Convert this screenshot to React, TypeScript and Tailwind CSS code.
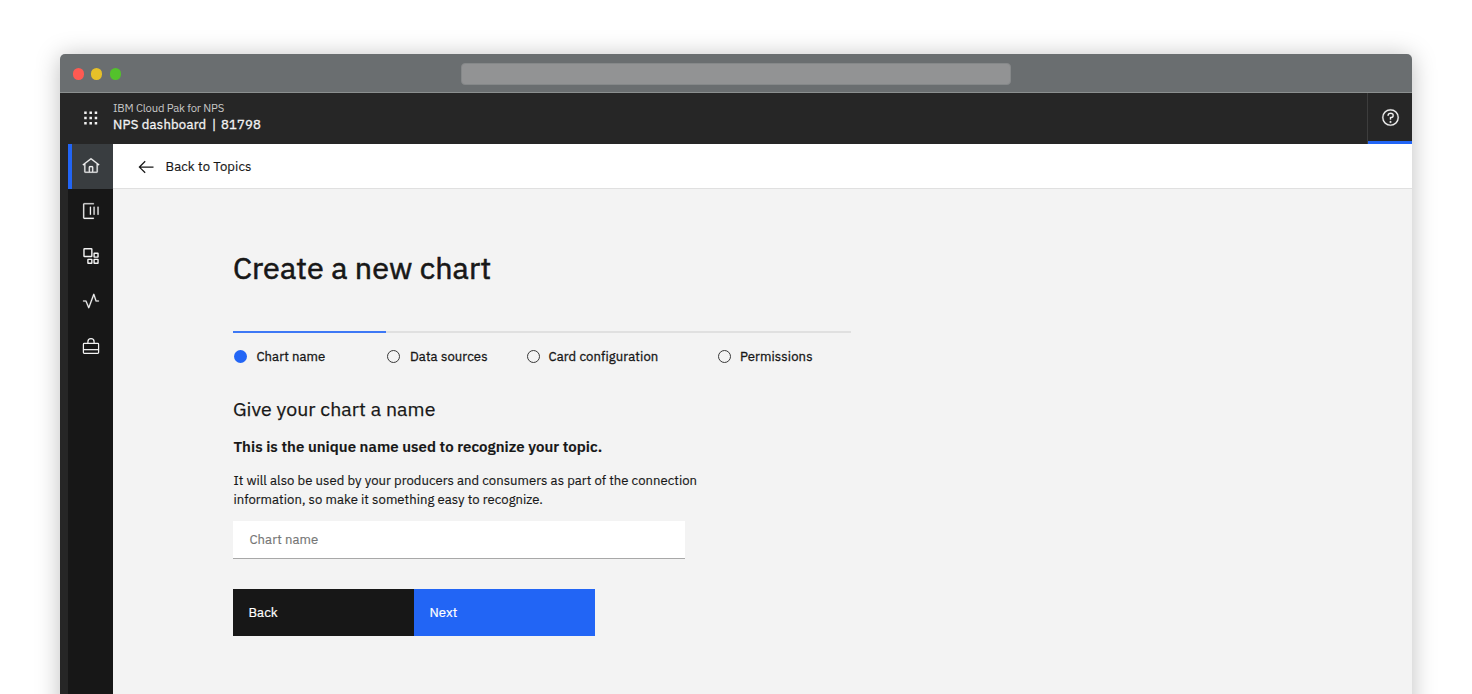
import type { ReactNode } from "react";

function Icon({ size = 18, stroke = "0.4", children }: { size?: number; stroke?: string; children: ReactNode }) {
  return (
    <svg
      width={size}
      height={size}
      viewBox="0 0 32 32"
      fill="currentColor"
      stroke="currentColor"
      strokeWidth={stroke}
      className="shrink-0"
    >
      {children}
    </svg>
  );
}

const SwitcherIcon = () => (
  <svg width="14" height="14" viewBox="0 0 14 14" fill="currentColor">
    {[0.5, 5.75, 11].map((y) => [0.2, 5.45, 10.7].map((x) => <rect key={`${x}-${y}`} x={x} y={y} width="2.5" height="2.5" />))}
  </svg>
);

const HomeIcon = () => (
  <Icon>
    <path d="M16.6123,2.2138a1.01,1.01,0,0,0-1.2427,0L1,13.4194l1.2427,1.5717L4,13.621V26a2.0041,2.0041,0,0,0,2,2H26a2.0037,2.0037,0,0,0,2-2V13.63L29.7573,15,31,13.4282ZM18,26H14V18h4Zm2,0V18a2.0023,2.0023,0,0,0-2-2H14a2.002,2.002,0,0,0-2,2v8H6V12.0615l10-7.79,10,7.8005V26Z" />
  </Icon>
);

const TopicsIcon = () => (
  <Icon>
    <path d="M21 2H4a2 2 0 0 0-2 2v24a2 2 0 0 0 2 2H21v-2H4V4H21zM14 8.500h2v14h-2zM20.500 8.500h2v14h-2zM27.500 8.500h2v14h-2z" />
  </Icon>
);

const BlocksIcon = () => (
  <Icon>
    <g fill="none" strokeWidth="2.5">
      <rect x="3.5" y="3" width="14" height="14" rx="1" />
      <rect x="21.500" y="11" width="7" height="7" rx="0.5" />
      <rect x="21.500" y="22" width="7" height="7" rx="0.5" />
      <rect x="10.500" y="22" width="7" height="7" rx="0.5" />
    </g>
  </Icon>
);

const ActivityIcon = () => (
  <Icon>
    <path d="M12,29a1,1,0,0,1-.92-.62L6.33,17H2V15H7a1,1,0,0,1,.92.62L12,25.28,20.06,3.65A1,1,0,0,1,21,3a1,1,0,0,1,.93.68L25.72,15H30v2H25a1,1,0,0,1-.95-.68L21,7,12.94,28.35A1,1,0,0,1,12,29Z" />
  </Icon>
);

const ToolboxIcon = () => (
  <Icon>
    <g fill="none" strokeWidth="2.2">
      <path d="M10.500 11.500V8.500a5.500 5.500 0 0 1 11 0V11.500" />
      <rect x="2.500" y="11.500" width="27" height="17.500" rx="1.500" />
      <path d="M2.500 22.500h27" />
    </g>
  </Icon>
);

const HelpIcon = () => (
  <Icon size={19}>
    <path d="M16,2A14,14,0,1,0,30,16,14,14,0,0,0,16,2Zm0,26A12,12,0,1,1,28,16,12,12,0,0,1,16,28Z" />
    <circle cx="16" cy="23.5" r="1.5" />
    <path d="M17,8H15.5A4.49,4.49,0,0,0,11,12.49V13h2v-.5A2.5,2.5,0,0,1,15.5,10H17a2.5,2.5,0,0,1,0,5H15v4.5h2V17a4.5,4.5,0,0,0,0-9Z" />
  </Icon>
);

const NAV = [
  { name: "topics", icon: <TopicsIcon /> },
  { name: "blocks", icon: <BlocksIcon /> },
  { name: "activity", icon: <ActivityIcon /> },
  { name: "toolbox", icon: <ToolboxIcon /> },
];

const STEPS = [
  { label: "Chart name", width: "w-[152.5px]", gap: "ml-[9px]", spacing: "tracking-[0.08px]", active: true },
  { label: "Data sources", width: "w-[140px]", gap: "ml-[10px]", spacing: "tracking-[0.11px]", active: false },
  { label: "Card configuration", width: "w-[191px]", gap: "ml-[8.5px]", spacing: "tracking-[0.11px]", active: false },
  { label: "Permissions", width: "w-[134px]", gap: "ml-[9px]", spacing: "tracking-[0.12px]", active: false },
];

export default function App() {
  return (
    <div className="h-[694px] overflow-hidden bg-white px-[60px] pt-[54px] font-['IBM_Plex_Sans',Roboto,sans-serif] text-[13.1px] text-[#171717]">
      <div className="flex h-[700px] flex-col overflow-hidden rounded-t-[5px] bg-[#f3f3f3] shadow-[0_2px_24px_rgba(0,0,0,0.26)]">
        <div className="flex h-[39px] shrink-0 items-center border-b border-[#8b8f8f] bg-[#6a6e70]">
          <div className="flex w-[401px] items-center gap-[7.4px] pt-[2px] pl-[12.5px]">
            <span className="size-[11.3px] rounded-full bg-[#ff5a52]" />
            <span className="size-[11.3px] rounded-full bg-[#e6c029]" />
            <span className="size-[11.3px] rounded-full bg-[#53c22b]" />
          </div>
          <div className="mt-[2px] h-[22px] w-[550px] rounded-[4px] border border-[#858889] bg-[#929394]" />
        </div>

        <header className="flex h-[51px] shrink-0 bg-[#262626] text-[#f3f3f3]">
          <div className="flex w-[53px] items-center pb-[2px] pl-[23.500px]">
            <SwitcherIcon />
          </div>
          <div className="flex flex-1 flex-col pt-[8px]">
            <span className="text-[11.25px] leading-[14px] tracking-[-0.18px] text-[#c6c6c6]">IBM Cloud Pak for NPS</span>
            <span className="mt-[1px] flex leading-[18px] [-webkit-text-stroke:0.3px]">
              <span className="w-[99px] tracking-[0.22px]">NPS dashboard</span>
              <span className="w-[9px]">|</span>
              <span className="tracking-[0.12px]">81798</span>
            </span>
          </div>
          <div className="flex w-[45px] items-center justify-center border-l border-[#3d3d3d] pb-[2px] shadow-[inset_0_-3px_0_#2265f5]">
            <HelpIcon />
          </div>
        </header>

        <div className="flex min-h-0 flex-1">
          <nav className="w-[53px] shrink-0 border-l-[8px] border-[#262626] bg-[#171717] text-[#f3f3f3]">
            <div className="flex h-[45px] items-center justify-center border-l-4 border-[#2265f5] bg-[#393d40] pr-[4px] pb-[1px]">
              <HomeIcon />
            </div>
            {NAV.map((item) => (
              <div key={item.name} className="flex h-[45px] items-center justify-center pb-[1px]">
                {item.icon}
              </div>
            ))}
          </nav>

          <main className="flex-1">
            <div className="flex h-[45px] items-center border-b border-[#e0e0e0] bg-white pl-[22.500px] pt-[1px]">
              <Icon size={20} stroke="0">
                <path d="M14 26 15.41 24.59 7.83 17 28 17 28 15 7.83 15 15.41 7.41 14 6 4 16 14 26z" />
              </Icon>
              <span className="ml-[10px] tracking-[0.08px] [-webkit-text-stroke:0.15px]">Back to Topics</span>
            </div>

            <div className="pl-[120.4px]">
              <h1 className="mt-[59px] -ml-[0.5px] text-[30.5px] leading-[40px] tracking-[0.1px] [-webkit-text-stroke:0.6px]">
                Create a new chart
              </h1>

              <div className="mt-[43px] flex h-[2px] w-[618px] bg-[#e0e0e0]">
                <div className="w-[153px] bg-[#3d78f5]" />
              </div>
              <div className="mt-[14px] flex h-[20px] w-[618px] items-center [-webkit-text-stroke:0.3px]">
                {STEPS.map((s) => (
                  <div key={s.label} className={"flex items-center pl-[1px] " + s.width}>
                    <span
                      className={
                        "mb-[1px] size-[13px] shrink-0 rounded-full " +
                        (s.active ? "bg-[#2265f5]" : "border border-[#393939]")
                      }
                    />
                    <span className={"whitespace-nowrap " + s.gap + " " + s.spacing}>{s.label}</span>
                  </div>
                ))}
              </div>

              <h2 className="mt-[30px] -ml-[0.5px] text-[19.5px] leading-[24px] tracking-[0.08px] [-webkit-text-stroke:0.25px]">
                Give your chart a name
              </h2>
              <p className="mt-[16px] text-[15px] leading-[20px] font-semibold tracking-[0.03px] [-webkit-text-stroke:0.15px]">
                This is the unique name used to recognize your topic.
              </p>
              <p className="mt-[14px] leading-[19px] tracking-[0.035px] [-webkit-text-stroke:0.15px]">
                It will also be used by your producers and consumers as part of the connection
                <br />
                information, so make it something easy to recognize.
              </p>
              <div className="mt-[12px] flex h-[38px] w-[452px] items-center border-b border-[#a8a8a8] bg-white pl-[16px] tracking-[0.08px] text-[#757575] [-webkit-text-stroke:0.15px]">
                Chart name
              </div>

              <div className="mt-[30px] flex text-white [-webkit-text-stroke:0.2px]">
                <div className="flex h-[47px] w-[181px] items-center bg-[#171717] pl-[15px] tracking-[0.1px]">Back</div>
                <div className="flex h-[47px] w-[180.5px] items-center bg-[#2265f5] pl-[15px] tracking-[0.15px]">Next</div>
              </div>
            </div>
          </main>
        </div>
      </div>
    </div>
  );
}
